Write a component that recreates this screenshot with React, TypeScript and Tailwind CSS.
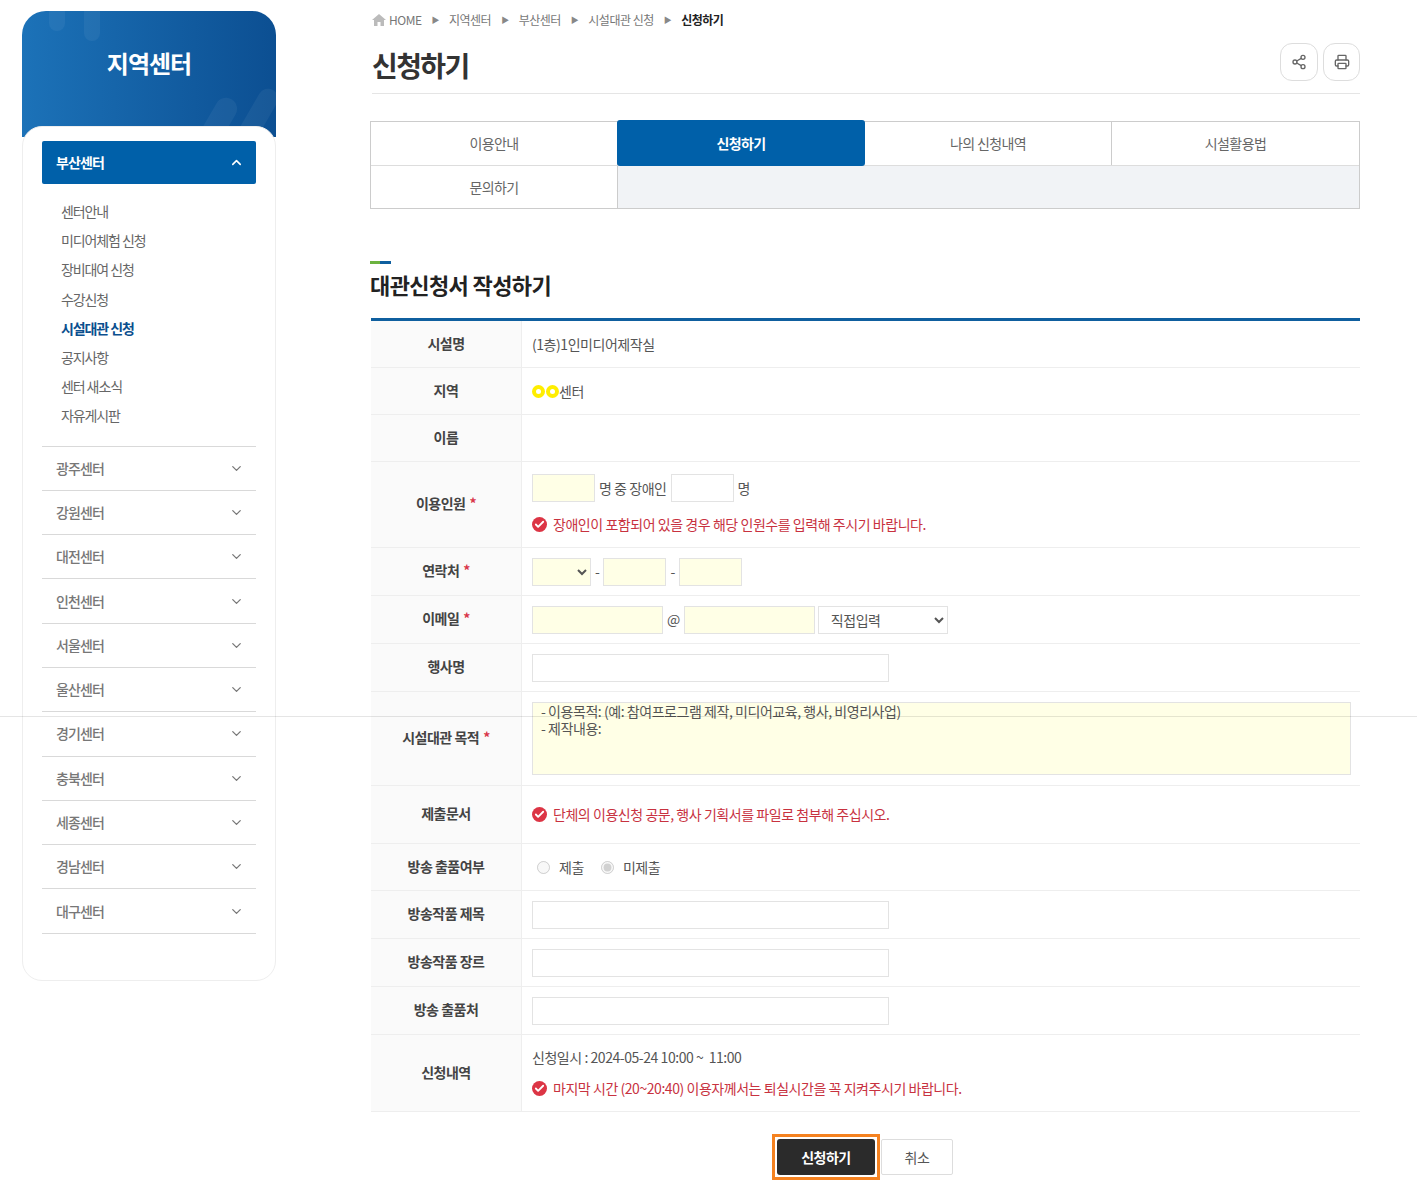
import { ChevronDown, ChevronUp, Share2, Printer, Check } from 'lucide-react';

const subMenu = ['센터안내', '미디어체험 신청', '장비대여 신청', '수강신청', '시설대관 신청', '공지사항', '센터 새소식', '자유게시판'];
const centers = ['광주센터', '강원센터', '대전센터', '인천센터', '서울센터', '울산센터', '경기센터', '충북센터', '세종센터', '경남센터', '대구센터'];

const inputBase = 'h-[28px] border border-[#e3e3e3] outline-none';
const required = 'bg-[#ffffe6]';

function Sidebar() {
  return (
    <aside className="w-[254px] shrink-0">
      <div className="relative h-[126px] overflow-hidden rounded-t-[24px] bg-gradient-to-r from-[#1c72b8] to-[#0c4f92] pt-[34px] text-center">
        <div className="absolute left-[27px] top-0 h-[20px] w-[16px] rounded-b-full bg-white/5" />
        <div className="absolute left-[62px] top-0 h-[30px] w-[16px] rounded-b-full bg-white/5" />
        <div className="absolute left-[186px] top-[85px] h-[50px] w-[22px] rotate-[30deg] rounded-full bg-white/5" />
        <div className="absolute left-[226px] top-[75px] h-[60px] w-[20px] rotate-[30deg] rounded-full bg-white/5" />
        <h2 className="relative text-[24px] leading-[36px] font-bold tracking-[-1px] text-white">지역센터</h2>
      </div>
      <div className="relative -mt-[11px] h-[855px] rounded-[20px] border border-[#eeeeee] bg-white px-[19px] pt-[14px]">
        <div className="flex h-[43px] items-center justify-between rounded-[2px] bg-[#0060a9] pl-[14px] pr-[12px] text-white">
          <span className="text-[14px] font-bold tracking-[-0.9px]">부산센터</span>
          <ChevronUp size={15} strokeWidth={2.5} />
        </div>
        <ul className="pb-[15px] pl-[19px] pt-[13px]">
          {subMenu.map((item) => (
            <li
              key={item}
              className={`h-[29.2px] text-[14px] leading-[29px] tracking-[-1.1px] ${item === '시설대관 신청' ? 'font-bold text-[#0b4f8e]' : 'text-[#666666]'}`}
            >
              {item}
            </li>
          ))}
        </ul>
        <ul className="border-t border-[#d9d9d9]">
          {centers.map((c) => (
            <li key={c} className="flex h-[44.3px] items-center justify-between border-b border-[#d9d9d9] pl-[14px] pr-[12px] text-[#777777]">
              <span className="text-[14px] font-medium tracking-[-0.9px]">{c}</span>
              <ChevronDown size={15} strokeWidth={2} />
            </li>
          ))}
        </ul>
      </div>
    </aside>
  );
}

function Notice({ children }: { children: React.ReactNode }) {
  return (
    <p className="flex items-center text-[14px] tracking-[-0.45px] text-[#c8323f]">
      <span className="mr-[6px] flex h-[15px] w-[15px] shrink-0 items-center justify-center rounded-full bg-[#dc3545] text-white">
        <Check size={11} strokeWidth={4} />
      </span>
      {children}
    </p>
  );
}

function Row({ label, req, h, children }: { label: string; req?: boolean; h: string; children?: React.ReactNode }) {
  return (
    <div className={`flex border-b border-[#eeeeee] ${h}`}>
      <div className="flex w-[151px] shrink-0 items-center justify-center border-r border-[#eeeeee] bg-[#fafafa] pb-[2px] text-[14px] font-bold tracking-[-0.5px] text-[#444444]">
        {label}
        {req && <span className="ml-[4px] text-[#d9364a]">*</span>}
      </div>
      <div className="flex flex-1 flex-col justify-center pl-[10px] text-[14px] tracking-[-0.45px] text-[#555555]">{children}</div>
    </div>
  );
}

function Crumb({ children }: { children: React.ReactNode }) {
  return (
    <>
      <span className="mx-[10px] text-[8px] text-[#888888]">▶</span>
      {children}
    </>
  );
}

export default function App() {
  return (
    <div className="relative h-[1195px] overflow-hidden bg-white font-['Noto_Sans_CJK_KR',sans-serif]">
      <div className="flex pl-[22px] pt-[11px]">
        <Sidebar />
        <main className="ml-[94px] w-[990px]">
          <div className="flex h-[18px] items-center pl-[2px] text-[12px] tracking-[-0.5px] text-[#777777]">
            <svg width="14" height="12" viewBox="0 0 14 12" className="mr-[3px] fill-[#bbbbbb]">
              <path d="M7 0 L14 6 H12 V12 H8.5 V8 H5.5 V12 H2 V6 H0 Z" />
            </svg>
            HOME
            <Crumb>지역센터</Crumb>
            <Crumb>부산센터</Crumb>
            <Crumb>시설대관 신청</Crumb>
            <Crumb><b className="font-bold text-[#222222]">신청하기</b></Crumb>
          </div>
          <div className="ml-[2px] flex h-[65px] items-center justify-between border-b border-[#e5e5e5] pt-[7px]">
            <h1 className="text-[28px] font-bold tracking-[-1.6px] text-[#333333]">신청하기</h1>
            <div className="flex gap-[5px] pb-[6px]">
              <button className="flex h-[38px] w-[38px] items-center justify-center rounded-[12px] border border-[#dddddd] text-[#666666]">
                <Share2 size={16} />
              </button>
              <button className="flex h-[38px] w-[37px] items-center justify-center rounded-[12px] border border-[#dddddd] text-[#666666]">
                <Printer size={16} />
              </button>
            </div>
          </div>

          <div className="relative mt-[27px] h-[88px] border border-[#cccccc] bg-[#f1f3f6] text-[14px] tracking-[-0.6px] text-[#666666]">
            <div className="grid grid-cols-4 bg-white">
              <div className="flex h-[43px] items-center justify-center border-r border-[#cccccc]">이용안내</div>
              <div className="relative flex h-[43px] items-center justify-center">
                <div className="absolute -top-[2px] left-[-1px] right-0 flex h-[46px] items-center justify-center rounded-[3px] bg-[#0060a9] font-bold text-white">신청하기</div>
              </div>
              <div className="flex h-[43px] items-center justify-center border-r border-[#cccccc]">나의 신청내역</div>
              <div className="flex h-[43px] items-center justify-center">시설활용법</div>
            </div>
            <div className="flex h-[43px] border-t border-[#dddddd]">
              <div className="flex w-[247px] items-center justify-center border-r border-[#cccccc] bg-white">문의하기</div>
            </div>
          </div>

          <div className="mt-[52px] flex h-[3px] w-[21px]">
            <span className="h-full w-[10px] bg-[#6cb33f]" />
            <span className="h-full w-[11px] bg-[#0f5f9f]" />
          </div>
          <h3 className="mt-[2px] text-[22px] leading-[36px] font-bold tracking-[-0.6px] text-[#222222]">대관신청서 작성하기</h3>

          <div className="ml-[1px] mt-[16px] border-t-[3px] border-[#0f5f9f]">
            <Row label="시설명" h="h-[47px]">(1층)1인미디어제작실</Row>
            <Row label="지역" h="h-[47px]">
              <div className="flex items-center">
                <span className="h-[13px] w-[13px] rounded-full border-[4px] border-[#ffee00] bg-white" />
                <span className="ml-[1px] h-[13px] w-[13px] rounded-full border-[4px] border-[#ffee00] bg-white" />
                센터
              </div>
            </Row>
            <Row label="이름" h="h-[47px]" />
            <Row label="이용인원" req h="h-[86px]">
              <div className="flex items-center">
                <input className={`${inputBase} ${required} w-[63px]`} />
                <span className="mx-[4px]">명 중 장애인</span>
                <input className={`${inputBase} w-[63px]`} />
                <span className="ml-[4px]">명</span>
              </div>
              <div className="mt-[12px]">
                <Notice>장애인이 포함되어 있을 경우 해당 인원수를 입력해 주시기 바랍니다.</Notice>
              </div>
            </Row>
            <Row label="연락처" req h="h-[48px]">
              <div className="flex items-center">
                <select className={`${inputBase} ${required} w-[59px]`} />
                <span className="mx-[4px]">-</span>
                <input className={`${inputBase} ${required} w-[63px]`} />
                <span className="mx-[4px]">-</span>
                <input className={`${inputBase} ${required} w-[63px]`} />
              </div>
            </Row>
            <Row label="이메일" req h="h-[48px]">
              <div className="flex items-center">
                <input className={`${inputBase} ${required} w-[131px]`} />
                <span className="mx-[4px]">@</span>
                <input className={`${inputBase} ${required} w-[131px]`} />
                <select className={`${inputBase} ml-[3px] w-[130px] pl-[8px]`}>
                  <option>직접입력</option>
                </select>
              </div>
            </Row>
            <Row label="행사명" h="h-[48px]">
              <input className={`${inputBase} w-[357px]`} />
            </Row>
            <Row label="시설대관 목적" req h="h-[94px]">
              <textarea
                readOnly
                className={`h-[73px] w-[819px] resize-none border border-[#e3e3e3] ${required} px-[8px] text-[14px] leading-[17px] text-[#555555] outline-none`}
                defaultValue={'- 이용목적: (예: 참여프로그램 제작, 미디어교육, 행사, 비영리사업)\n- 제작내용:'}
              />
            </Row>
            <Row label="제출문서" h="h-[58px]">
              <Notice>단체의 이용신청 공문, 행사 기획서를 파일로 첨부해 주십시오.</Notice>
            </Row>
            <Row label="방송 출품여부" h="h-[47px]">
              <div className="flex items-center pl-[5px]">
                <input type="radio" name="broadcast" disabled className="h-[13px] w-[13px]" />
                <span className="ml-[9px]">제출</span>
                <input type="radio" name="broadcast" disabled defaultChecked className="ml-[17px] h-[13px] w-[13px]" />
                <span className="ml-[9px]">미제출</span>
              </div>
            </Row>
            <Row label="방송작품 제목" h="h-[48px]">
              <input className={`${inputBase} w-[357px]`} />
            </Row>
            <Row label="방송작품 장르" h="h-[48px]">
              <input className={`${inputBase} w-[357px]`} />
            </Row>
            <Row label="방송 출품처" h="h-[48px]">
              <input className={`${inputBase} w-[357px]`} />
            </Row>
            <Row label="신청내역" h="h-[77px]">
              <p>신청일시 : 2024-05-24 10:00 ~ &nbsp;11:00</p>
              <div className="mt-[10px]">
                <Notice>마지막 시간 (20~20:40) 이용자께서는 퇴실시간을 꼭 지켜주시기 바랍니다.</Notice>
              </div>
            </Row>
          </div>

          <div className="ml-[402px] mt-[22px] flex items-center">
            <div className="border-[3px] border-[#f58220] p-[2px]">
              <button className="flex h-[36px] w-[98px] items-center justify-center rounded-[3px] bg-[#2b2b2b] text-[14px] font-bold tracking-[-0.5px] text-white">신청하기</button>
            </div>
            <button className="ml-[1px] flex h-[36px] w-[72px] items-center justify-center rounded-[2px] border border-[#dddddd] text-[14px] tracking-[-0.5px] text-[#555555]">취소</button>
          </div>
        </main>
      </div>
      <div className="absolute left-0 right-0 top-[716px] h-px bg-black/10" />
    </div>
  );
}
